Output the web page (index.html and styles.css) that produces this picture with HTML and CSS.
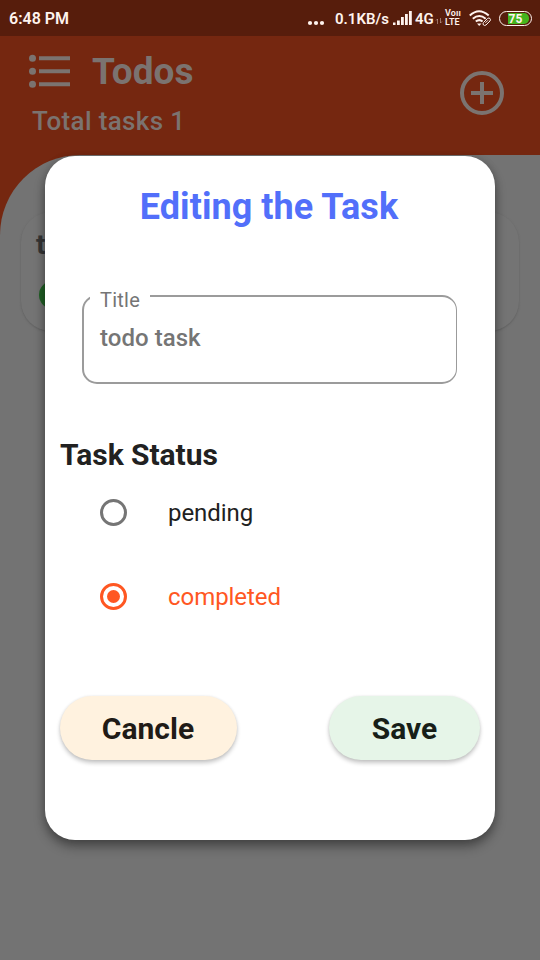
FILE: index.html
```html
<!DOCTYPE html>
<html lang="en">
<head>
<meta charset="utf-8">
<title>Todos</title>
<link rel="stylesheet" href="styles.css">
</head>
<body>
<div class="statusbar">
  <span class="clock">6:48 PM</span>
  <svg class="dots" width="18" height="6" viewBox="0 0 18 6" fill="currentColor"><circle cx="3" cy="3" r="2.1"/><circle cx="9" cy="3" r="2.1"/><circle cx="15" cy="3" r="2.1"/></svg>
  <span class="speed">0.1KB/s</span>
  <svg class="signal" width="20" height="14" viewBox="0 0 20 14" fill="currentColor"><path d="M0 11.500h2.500V14H0zM4 9.500h2.800V14H4zM8 6h2.800v8H8zM12 3h2.800v11H12zM16 0h2.800v14H16z"/></svg>
  <span class="net">4G</span>
  <svg class="data" width="6" height="6" viewBox="0 0 6 6" fill="none" stroke="currentColor"><path d="M1.500 6V1L0 2.500M4.500 0v5L6 3.500"/></svg>
  <span class="volte"><span>Voıı</span><span>LTE</span></span>
  <svg class="wifi" width="23" height="17" viewBox="0 0 23 17" fill="none" stroke="currentColor" stroke-width="2"><path d="M.8 5.500q9.200-8.500 18.900 0M3.800 8.700q6.500-5.500 12.900 0M6.800 11.600q3.500-3 6.800 0"/><path d="M8 13.500h4.500L10.200 16z" fill="currentColor" stroke="none"/><path d="M14.500 12.500l4-4q1.500-1 2.500 0t0 2.500l-4 4q-1.500 1-2.500 0t0-2.500M16.500 12.800l2.500-2.500" stroke-width="1"/></svg>
  <div class="battery"><div class="charge">75</div></div>
</div>
<header class="header">
  <div class="heading">
    <div class="brand">
      <svg width="42" height="34" viewBox="0 0 42 34" fill="currentColor"><circle cx="3.500" cy="3.200" r="3.500"/><circle cx="3.500" cy="16.200" r="3.500"/><circle cx="3.500" cy="29.200" r="3.500"/><path d="M10 1.200h31v4H10zM10 14.200h31v4H10zM10 27.200h31v4H10z"/></svg>
      <h1>Todos</h1>
    </div>
    <p class="total">Total tasks 1</p>
  </div>
  <svg class="add" width="46" height="46" viewBox="0 0 46 46" fill="none" stroke="currentColor" stroke-width="4"><circle cx="23" cy="23" r="20"/><path d="M12 23h22M23 12v22"/></svg>
</header>
<main class="sheet-wrap">
  <div class="sheet">
    <article class="task"><div class="task-name">todo task</div><div class="task-state"></div></article>
  </div>
</main>
<section class="dialog">
  <h2>Editing the Task</h2>
  <fieldset class="field">
    <legend>Title</legend>
    <div class="value">todo task</div>
  </fieldset>
  <h3>Task Status</h3>
  <div class="option"><i class="radio"></i><span class="pending">pending</span></div>
  <div class="option selected"><i class="radio"></i><span class="completed">completed</span></div>
  <div class="actions">
    <button class="cancel">Cancle</button>
    <button class="save">Save</button>
  </div>
</section>
</body>
</html>
```
FILE: styles.css
```css
* { box-sizing: border-box; }
body { margin: 0; width: 540px; height: 960px; overflow: hidden; position: relative; background: #737373; font-family: Roboto, sans-serif; color: #212121; }
h1, h2, h3, p { margin: 0; }
svg { display: block; flex: none; overflow: visible; }
.statusbar { display: flex; height: 36px; align-items: center; padding: 0 8px 0 9px; background: #571d0c; color: #fff3ee; font-size: 15px; font-weight: 600; line-height: 18px; white-space: nowrap; }
.clock { font-size: 16px; padding-top: 1px; }
.dots { margin: 9px 10px 0 auto; }
.speed { width: 54px; padding-top: 1px; }
.signal { margin: -1px 2px 0 4px; }
.net { width: 20px; padding-top: 1px; }
.data { margin: 6px 3px 0 1px; opacity: .4; }
.volte { display: flex; flex-direction: column; width: 16px; margin-right: 8px; font-size: 9px; line-height: 9px; letter-spacing: .1px; }
.wifi { margin-right: 7px; }
.battery { width: 33px; height: 15px; border: 1.500px solid #fff3ee; border-radius: 8px; padding: 1px 2px; }
.charge { height: 11px; border-radius: 5px; background: linear-gradient(90deg, transparent 22%, #45b51d 22%); font-size: 12px; line-height: 12px; text-align: center; font-weight: 700; }
.header { display: flex; justify-content: space-between; height: 119px; background: #752710; color: #7b7370; padding: 16px 35px 0 29px; }
.brand { display: flex; gap: 21px; height: 40px; align-items: center; }
h1 { font-size: 37px; line-height: 40px; font-weight: 700; letter-spacing: 0; }
.total { padding: 13px 0 0 3px; font-size: 26px; line-height: 32px; font-weight: 500; letter-spacing: .35px; }
.add { margin-top: 18px; }
.sheet-wrap { height: 805px; background: linear-gradient(#752710 90px, #737373 90px); }
.sheet { height: 100%; padding: 57px 21px 0; background: #737373; border-top-left-radius: 80px; }
.task { height: 119px; padding: 14px 15px; border-radius: 30px; background: #747474; box-shadow: 0 1px 2px #606060; }
.task-name { font-size: 28px; line-height: 38px; font-weight: 700; color: #353535; }
.task-state { width: 110px; height: 28px; margin: 17px 0 0 3px; border-radius: 14px; background: #205f25; }
.dialog { position: absolute; left: 45px; top: 156px; width: 450px; height: 684px; padding: 29px 15px 0; border-radius: 30px; background: #fff; box-shadow: 0 7px 12px rgba(0,0,0,.32), 0 2px 8px rgba(0,0,0,.2); }
h2 { margin-left: -2px; color: #526ffa; font-size: 36px; line-height: 44px; font-weight: 700; text-align: center; letter-spacing: .05px; }
.field { width: 375px; height: 96px; margin: 59px 0 0 22px; padding: 0 16px; border: 1.500px solid #929292; border-width: 2px 1px 2px 2px; border-color: #9b9b9b; border-radius: 15px; color: #757575; }
legend { margin-left: -10px; padding: 0 10px; height: 16px; font-size: 20px; line-height: 24px; letter-spacing: .25px; }
.value { margin-top: 19px; font-size: 24px; line-height: 30px; font-weight: 500; letter-spacing: .05px; }
h3 { margin-top: 53px; font-size: 30px; line-height: 36px; font-weight: 700; letter-spacing: -.05px; }
.option { display: flex; align-items: center; height: 84px; padding-left: 40px; gap: 41px; font-size: 24px; letter-spacing: -.05px; }
h3 + .option { margin-top: -2px; }
.radio { display: flex; width: 27px; height: 27px; margin-top: -1px; align-items: center; justify-content: center; border: 3px solid #757575; border-radius: 50%; }
.selected { color: #ff5722; }
.selected .radio { border-color: #ff5722; }
.selected .radio::after { content: ""; width: 13px; height: 13px; border-radius: 50%; background: #ff5722; }
.actions { display: flex; justify-content: space-between; margin-top: 57px; }
button { height: 64px; padding: 1px 0 0; border: 0; border-radius: 33px; font: 700 30px Roboto, sans-serif; color: #211b16; box-shadow: 0 3px 4px rgba(0,0,0,.22), 0 0 3px rgba(0,0,0,.08); }
.cancel { width: 177px; padding-right: 8px; background: #fff2df; }
.save { width: 151px; background: #e6f5e8; color: #171e18; }
.cancel { padding-right: 1px; }
```
